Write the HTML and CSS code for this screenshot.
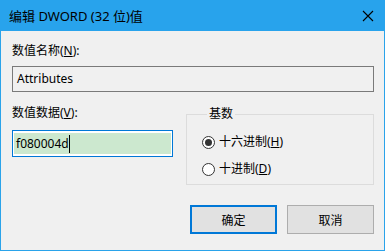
FILE: index.html
```html
<!DOCTYPE html>
<html lang="zh-CN">
<head>
  <meta charset="UTF-8">
  <title>编辑 DWORD (32 位)值</title>
  <link rel="stylesheet" href="styles.css">
</head>
<body>
  <div class="window">
    <div class="titlebar">
      <span class="title">编辑 DWORD (32 位)值</span>
      <svg class="close" width="12" height="12" viewBox="0 0 12 12">
        <path d="M1 1 L11 11 M11 1 L1 11" stroke="#000" stroke-width="1.1" fill="none"/>
      </svg>
    </div>
    <div class="content">
      <label class="label first">数值名称(<u>N</u>):</label>
      <div class="textbox">Attributes</div>

      <div class="row">
        <div class="col-left">
          <label class="label">数值数据(<u>V</u>):</label>
          <div class="textbox focused"><span class="sel">f080004d</span></div>
        </div>
        <fieldset class="group">
          <legend>基数</legend>
          <div class="radio"><span class="dot checked"></span>十六进制(<u>H</u>)</div>
          <div class="radio"><span class="dot"></span>十进制(<u>D</u>)</div>
        </fieldset>
      </div>

      <div class="buttons">
        <button class="btn default">确定</button>
        <button class="btn">取消</button>
      </div>
    </div>
  </div>
</body>
</html>
```

FILE: styles.css
```css
body {
  margin: 0;
  font-family: "Noto Sans", "Noto Sans CJK SC", sans-serif;
  font-size: 12px;
  color: #000;
}
.window {
  width: 385px;
  height: 251px;
  box-sizing: border-box;
  background: #f0f0f0;
  border: 1px solid #2aa3ea;
  border-top: none;
}
.titlebar {
  height: 31px;
  margin: 0 -1px;
  background: #28a3ec;
  display: flex;
  align-items: center;
  justify-content: space-between;
  padding: 0 10px 0 9px;
}
.title {
  font-size: 13px;
  line-height: 16px;
}
.close {
  margin-right: 1px;
}
.content {
  padding: 0 10px 0 11px;
}
.label {
  display: block;
  line-height: 16px;
}
.label.first {
  margin-top: 12px;
  margin-bottom: 7px;
}
.textbox {
  height: 26px;
  box-sizing: border-box;
  border: 1px solid #7a7a7a;
  background: #f0f0f0;
  padding: 0 4px;
  line-height: 24px;
  display: flex;
  align-items: center;
}
.row {
  display: flex;
  gap: 13px;
  margin-top: 10px;
}
.col-left {
  width: 161px;
  padding-top: 3px;
}
.col-left .label {
  margin-bottom: 9px;
}
.textbox.focused {
  border: 1px solid #0078d7;
  height: 27px;
  background: #fff;
  padding: 0 1px;
}
.sel {
  background: #cce8cf;
  flex: 1;
  height: 21px;
  line-height: 21px;
  padding-left: 2px;
  display: flex;
  align-items: center;
}
.sel::after {
  content: "";
  display: block;
  width: 1px;
  height: 18px;
  background: #000;
}
.group {
  flex: 1;
  margin: 4px 0 0;
  padding: 12px 0 0 15px;
  border: 1px solid #dcdcdc;
  height: 79px;
  box-sizing: border-box;
}
.group legend {
  padding: 0 2px;
  margin-left: 5px;
  line-height: 16px;
}
.radio {
  display: flex;
  align-items: center;
  height: 16px;
  line-height: 16px;
  margin-bottom: 11px;
}
.dot {
  width: 13px;
  height: 13px;
  box-sizing: border-box;
  border: 1px solid #333;
  border-radius: 50%;
  background: #fff;
  margin-right: 4px;
  display: flex;
  align-items: center;
  justify-content: center;
}
.dot.checked::after {
  content: "";
  width: 7px;
  height: 7px;
  border-radius: 50%;
  background: #333;
}
.buttons {
  display: flex;
  justify-content: flex-end;
  gap: 10px;
  margin-top: 20px;
}
.btn {
  width: 87px;
  height: 29px;
  box-sizing: border-box;
  border: 1px solid #adadad;
  background: #e1e1e1;
  font-family: inherit;
  font-size: 12px;
  padding: 0;
}
.btn.default {
  border: 2px solid #0078d7;
}
```
